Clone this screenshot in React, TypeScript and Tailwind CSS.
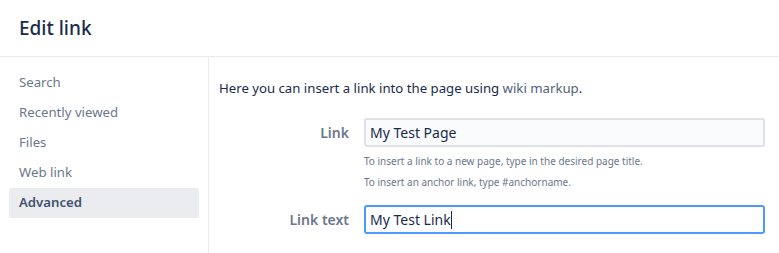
export default function App() {
  const items = ['Search', 'Recently viewed', 'Files', 'Web link', 'Advanced'];
  return (
    <div className="w-[779px] h-[253px] bg-white text-[#172b4d] overflow-hidden" style={{ fontFamily: '"Noto Sans", "Liberation Sans", sans-serif' }}>
      {/* Header */}
      <div className="h-[57px] border-b border-[#ebecf0] flex items-center px-[19px]">
        <h1 className="text-[19px] font-medium text-[#172b4d]">Edit link</h1>
      </div>

      <div className="flex h-[196px]">
        {/* Sidebar */}
        <nav className="w-[209px] border-r border-[#ebecf0] pt-[11px] px-[9px] shrink-0">
          {items.map((item) => (
            <div
              key={item}
              className={`h-[30px] flex items-center px-[10px] text-[13.2px] rounded-[3px] ${
                item === 'Advanced'
                  ? 'bg-[#ebecf0] text-[#42526e] font-semibold'
                  : 'text-[#6b778c]'
              }`}
            >
              {item}
            </div>
          ))}
        </nav>

        {/* Content */}
        <div className="flex-1 pl-[10px] pr-[14px] pt-[21px]">
          <p className="text-[13.2px] text-[#172b4d] leading-[20px]">
            Here you can insert a link into the page using{' '}
            <a className="text-[#505f79]">wiki markup</a>.
          </p>

          <div className="mt-[20px] flex items-center">
            <label className="w-[145px] text-right pr-[15px] text-[14px] font-semibold text-[#6b778c]">Link</label>
            <input
              readOnly
              value="My Test Page"
              className="flex-1 h-[29px] px-[4px] bg-[#fafbfc] border-2 border-[#dfe1e6] rounded-[3px] text-[14px] text-[#172b4d] outline-none"
            />
          </div>
          <div className="ml-[145px] mt-[4px] text-[10px] text-[#6b778c] leading-[21px]">
            <div>To insert a link to a new page, type in the desired page title.</div>
            <div>To insert an anchor link, type #anchorname.</div>
          </div>

          <div className="mt-[12px] flex items-center">
            <label className="w-[145px] text-right pr-[15px] text-[14px] font-semibold text-[#6b778c]">Link text</label>
            <div className="flex-1 h-[29px] px-[4px] bg-white border-2 border-[#4c9aff] rounded-[3px] text-[14px] text-[#172b4d] flex items-center">
              My Test Link<span className="w-px h-[18px] bg-[#172b4d]" />
            </div>
          </div>
        </div>
      </div>
    </div>
  );
}
